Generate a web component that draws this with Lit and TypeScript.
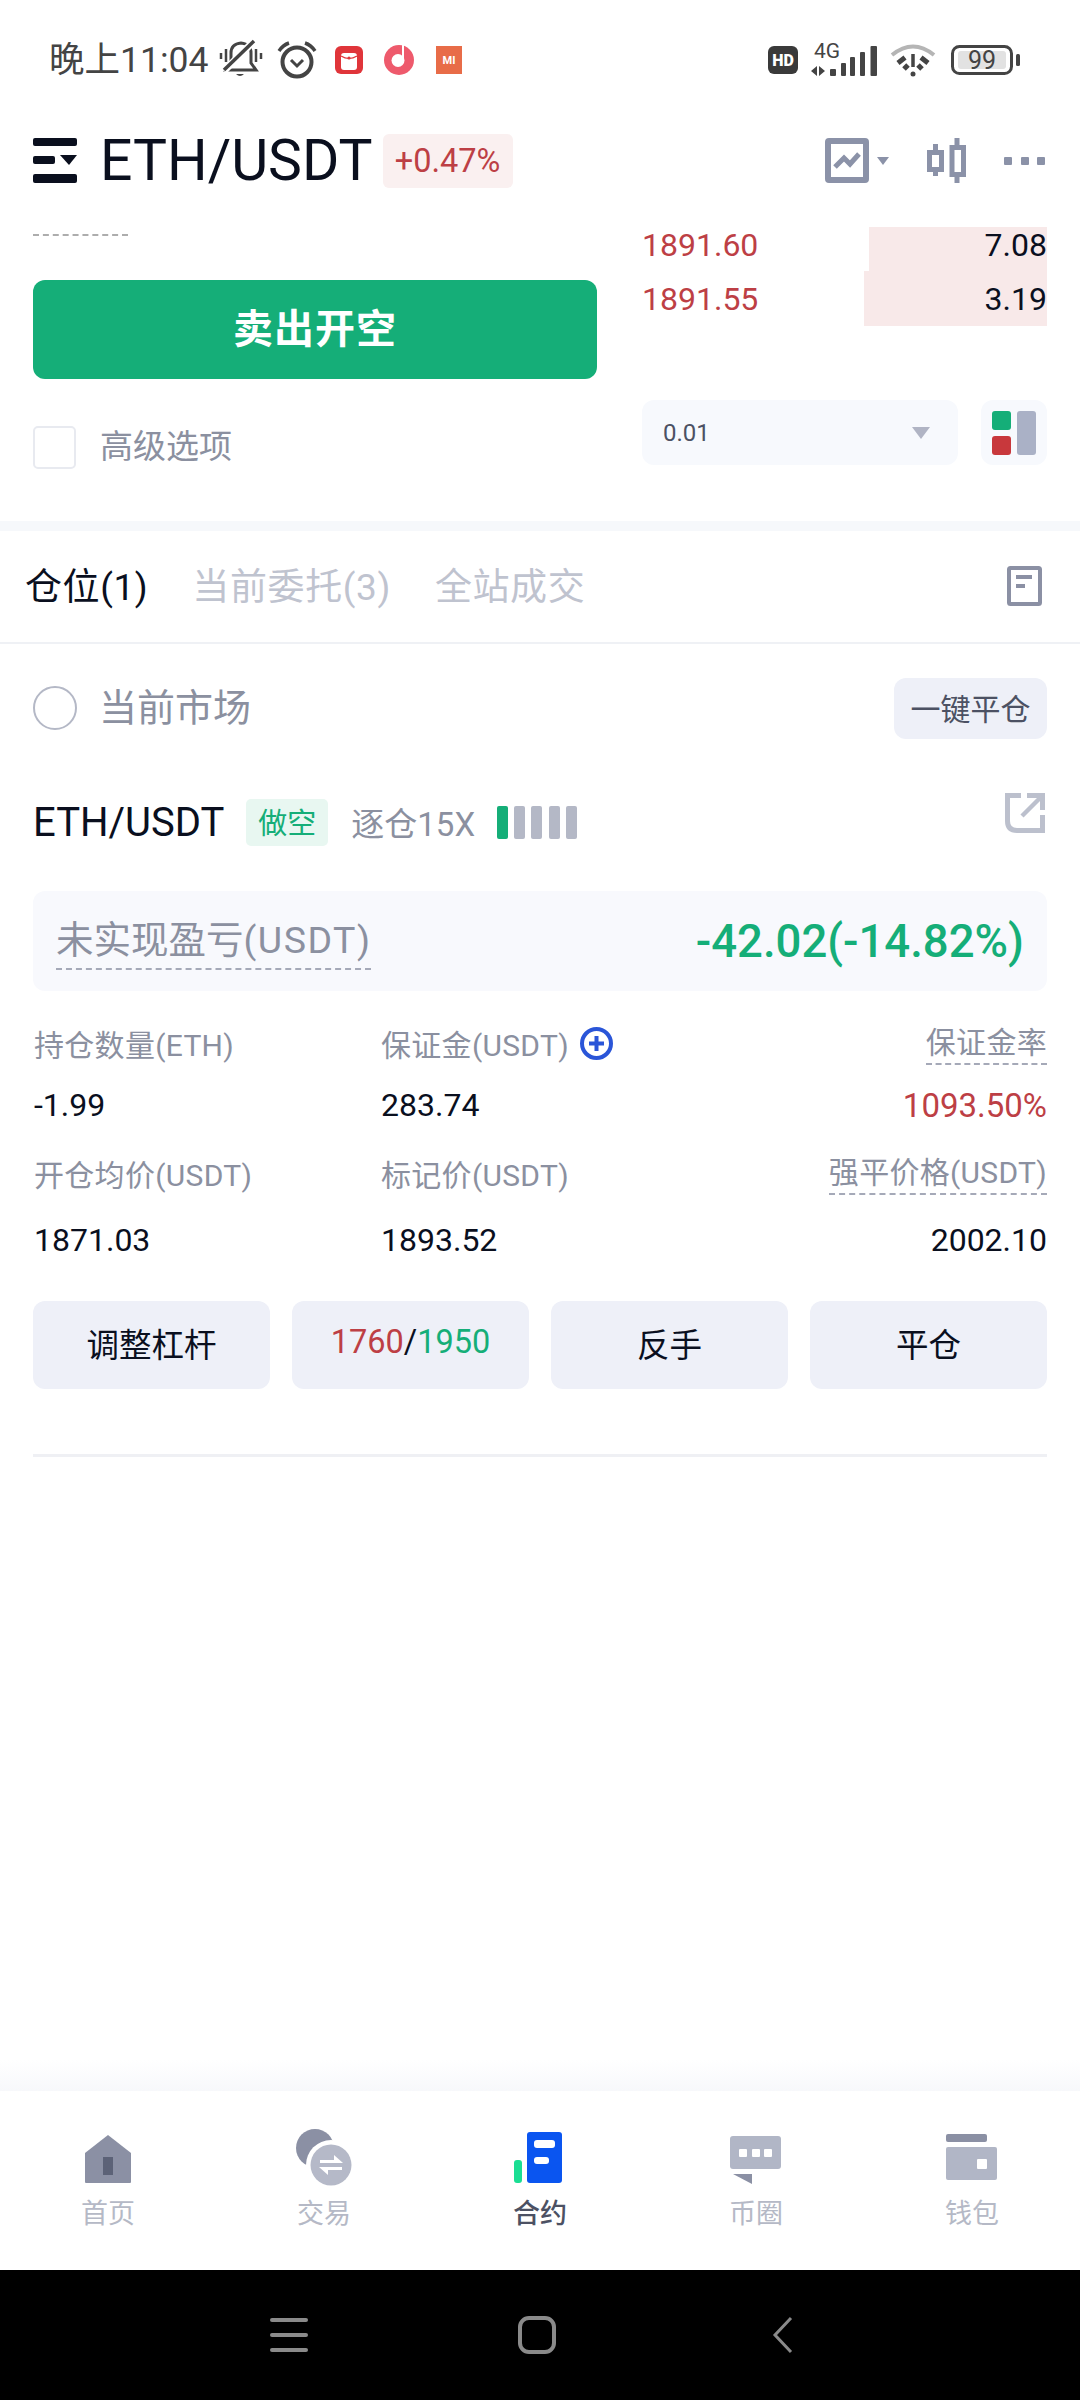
import { LitElement, html, css } from "lit";
import { customElement } from "lit/decorators.js";

const book = [
  { price: "1891.60", qty: "7.08", bar: 178 },
  { price: "1891.55", qty: "3.19", bar: 183 },
];

const stats = [
  [
    { t: "持仓数量(ETH)", c: "" },
    { t: "保证金(USDT)", c: "plus" },
    { t: "保证金率", c: "dash" },
  ],
  [
    { t: "-1.99", c: "" },
    { t: "283.74", c: "" },
    { t: "1093.50%", c: "red" },
  ],
  [
    { t: "开仓均价(USDT)", c: "" },
    { t: "标记价(USDT)", c: "" },
    { t: "强平价格(USDT)", c: "dash" },
  ],
  [
    { t: "1871.03", c: "" },
    { t: "1893.52", c: "" },
    { t: "2002.10", c: "" },
  ],
];

@customElement("app-root")
export class AppRoot extends LitElement {
  static styles = css`
    :host {
      display: flex;
      flex-direction: column;
      width: 1080px;
      height: 2400px;
      background: #fff;
      font-family: Roboto, "Noto Sans CJK SC", sans-serif;
      color: #0a0f1e;
      overflow: hidden;
    }
    svg { display: block; flex: none; overflow: visible; }

    .status { height: 118px; box-sizing: border-box; padding: 2px 0 0 49px; display: flex; align-items: center; color: #444; }
    .time { font-size: 35.5px; width: 170px; white-space: nowrap; line-height: 44px; }
    .s-alarm { margin-left: 14px; }
    .s-red { margin-left: 18px; }
    .s-music { margin-left: 21px; }
    .s-mi { margin-left: 22px; width: 26px; height: 28px; background: #e86c48; color: #fff; font-size: 11px; font-weight: 700; display: flex; align-items: center; justify-content: center; }
    .s-right { margin-left: auto; padding-right: 60px; display: flex; align-items: center; }
    .hd { width: 30px; height: 28px; border-radius: 6px; background: #3a3a3a; color: #fff; font-size: 16px; font-weight: 900; display: flex; align-items: center; justify-content: center; }
    .s-net { margin-left: 12px; }
    .s-wifi { margin-left: 13px; }
    .battery { margin-left: 15px; }

    .header { height: 85px; display: flex; align-items: center; padding: 0 35px 0 33px; }
    .title { font-size: 57px; margin-left: 23px; line-height: 1; white-space: nowrap; }
    .change { margin-left: 10px; height: 54px; width: 130px; border-radius: 6px; background: #faf0f0; color: #bd3f45; font-size: 32.5px; display: flex; align-items: center; justify-content: center; }
    .tools { margin-left: auto; display: flex; align-items: center; }
    .caret { margin-left: 8px; }
    .candle { margin-left: 38px; }
    .dots { margin-left: 38px; display: flex; gap: 8.5px; }
    .dots i { width: 8px; height: 8px; background: #8b92a8; border-radius: 1px; }

    .trade { height: 318px; padding: 0 33px; display: grid; grid-template-columns: 564px 405px; column-gap: 45px; }
    .left { display: flex; flex-direction: column; }
    .dashline { margin-top: 31px; width: 95px; height: 0; border-top: 2px dashed #adadad; }
    .sell { margin-top: 44px; height: 99px; box-sizing: border-box; padding-bottom: 8px; border-radius: 12px; background: #15ae78; color: #fff; font-size: 40px; font-weight: 700; display: flex; align-items: center; justify-content: center; letter-spacing: 1px; }
    .adv { margin-top: 41px; display: flex; align-items: center; gap: 24px; font-size: 33px; color: #8b90a0; }
    .adv span { padding-bottom: 6px; }
    .check { width: 43px; height: 43px; box-sizing: border-box; border: 2.5px solid #e8eaf0; border-radius: 5px; }

    .right { display: flex; flex-direction: column; padding-top: 24px; }
    .rows { overflow: hidden; height: 99px; }
    .row { position: relative; height: 53px; display: flex; align-items: center; justify-content: space-between; font-size: 32px; }
    .row:first-child { margin-top: -9px; }
    .row:last-child { height: 55px; }
    .row .bar { position: absolute; right: 0; top: 0; bottom: 0; background: #f8e9e9; }
    .row .p { color: #bd3f45; position: relative; }
    .row .q { position: relative; }
    .ctrl { margin-top: 74px; display: flex; justify-content: space-between; }
    .select { width: 316px; height: 65px; box-sizing: border-box; padding: 0 28px 0 21px; border-radius: 12px; background: #f7f9fd; display: flex; align-items: center; justify-content: space-between; font-size: 24px; color: #4c5163; }
    .layout { width: 66px; height: 65px; border-radius: 12px; background: #f7f9fd; display: flex; align-items: center; justify-content: center; }

    .band { height: 10px; background: #f6f8fb; }

    .tabs { height: 111px; padding: 0 38px 0 25px; display: flex; align-items: center; gap: 44px; font-size: 37px; letter-spacing: 0.6px; color: #bfc3cf; border-bottom: 2px solid #eff1f5; }
    .tabs span { padding-bottom: 5px; }
    .tabs .on { color: #0a0f1e; }
    .tabs svg { margin-left: auto; margin-bottom: 2px; }

    .market { height: 128px; padding: 0 33px; display: flex; align-items: center; }
    .radio { width: 44px; height: 44px; box-sizing: border-box; border: 2.5px solid #b4b8c6; border-radius: 50%; }
    .market .lbl { margin-left: 22px; font-size: 38px; color: #8b90a0; padding-bottom: 8px; }
    .close-all { margin-left: auto; width: 153px; height: 61px; box-sizing: border-box; padding-bottom: 2px; border-radius: 12px; background: #eef0f8; color: #4c5163; font-size: 30px; display: flex; align-items: center; justify-content: center; }

    .pos-head { height: 100px; padding: 0 35px 0 33px; display: flex; align-items: center; }
    .pair { font-size: 40px; white-space: nowrap; }
    .tag { margin-left: 22px; width: 82px; height: 47px; box-sizing: border-box; padding-bottom: 2px; border-radius: 5px; background: #e8f7f1; color: #15ae78; font-size: 29px; display: flex; align-items: center; justify-content: center; }
    .lev { margin-left: 23px; font-size: 33px; color: #8b90a0; white-space: nowrap; }
    .lev-bars { margin-left: 22px; display: flex; gap: 6.2px; }
    .lev-bars i { width: 11px; height: 33px; border-radius: 2px; background: #b4b8c6; }
    .lev-bars i.g { background: #15ae78; }
    .pos-head svg { margin-left: auto; align-self: flex-start; margin-top: 21px; }

    .pnl { margin: 19px 33px 0; height: 100px; box-sizing: border-box; padding: 0 23px; border-radius: 12px; background: #f8f9fd; display: flex; align-items: center; justify-content: space-between; }
    .pnl .k { font-size: 37.5px; color: #8b90a0; border-bottom: 2px dashed #a5a9b8; line-height: 48px; padding-bottom: 4px; margin-top: 4px; white-space: nowrap; }
    .pnl .k span { letter-spacing: 1.5px; }
    .pnl .v { font-size: 45.5px; font-weight: 500; color: #15ae78; white-space: nowrap; }

    .stats { margin: 20px 33px 0 34px; display: grid; grid-template-columns: 347px 1fr auto; grid-template-rows: 64px 60px 76px 58px; align-items: center; font-size: 32px; }
    .stats .lab { font-size: 30px; letter-spacing: 0.3px; color: #8b90a0; display: flex; align-items: center; gap: 11px; }
    .stats .end { justify-self: end; }
    .stats .dash > span { border-bottom: 2px dashed #a5a9b8; line-height: 36px; padding: 4px 0 2px; }
    .stats .red { color: #bd3f45; font-size: 33px; }

    .actions { margin: 32px 33px 0; display: flex; gap: 22px; }
    .actions div { flex: 1; height: 88px; box-sizing: border-box; padding-bottom: 6px; border-radius: 12px; background: #eef0f8; font-size: 32.5px; display: flex; align-items: center; justify-content: center; }
    .actions .r { color: #bd3f45; }
    .actions .g { color: #15ae78; }

    .rule { margin: 65px 33px 0; height: 3px; background: #eff0f4; }
    .spacer { flex: 1; }
    .fade { height: 31px; background: linear-gradient(#ffffff, #f7f8fb); }

    .nav { height: 179px; box-sizing: border-box; padding-top: 37px; display: grid; grid-template-columns: repeat(5, 216px); }
    .item { display: flex; flex-direction: column; align-items: center; font-size: 27px; color: #b5b9c6; }
    .item span { margin-top: 7px; line-height: 38px; }
    .item.on { color: #4c5163; font-weight: 500; }

    .sys { height: 130px; background: #000; padding: 0 0 0 270px; display: flex; align-items: center; }
    .sys .h { margin-left: 210px; }
    .sys .b { margin-left: 217px; }
  `;

  render() {
    return html`
      <div class="status">
        <div class="time">晚上11:04</div>
        <svg class="s-bell" width="44" height="40" viewBox="0 0 44 40" fill="none" stroke="#444" stroke-width="3">
          <path d="M7 30L12 23V13Q12 4 22 3Q32 4 32 13V23L37 30Z"/>
          <path d="M5 31L35 1" stroke="#fff" stroke-width="7"/>
          <path d="M5 30L35 1" stroke-width="3.5"/>
          <path d="M17 34Q21 38 25 34Z" fill="#444" stroke="none"/>
          <path d="M2 13V19M7 9V22M37 9V22M42 13V19" stroke-width="2.5"/>
        </svg>
        <svg class="s-alarm" width="40" height="38" viewBox="0 0 40 38" fill="none" stroke="#444" stroke-width="4">
          <circle cx="20" cy="21" r="14.5"/>
          <path d="M2 10Q6 4 12 2M28 2Q34 4 38 10" stroke-width="3.5"/>
          <path d="M14 19L20 25L26 19" stroke-width="3"/>
        </svg>
        <svg class="s-red" width="28" height="28" viewBox="0 0 28 28">
          <rect width="28" height="28" rx="6" fill="#e0353a"/>
          <rect x="6" y="7" width="16" height="17" rx="3" fill="#fff"/>
          <path d="M6 10Q14 15 22 10" fill="none" stroke="#e0353a" stroke-width="1.2"/>
          <circle cx="14" cy="12" r="1.6" fill="#e0353a"/>
        </svg>
        <svg class="s-music" width="30" height="30" viewBox="0 0 30 30">
          <circle cx="15" cy="15" r="15" fill="#ee5a6c"/>
          <circle cx="14" cy="15.5" r="6.5" fill="#fff"/>
          <rect x="18" y="0" width="2" height="15" fill="#fff"/>
        </svg>
        <div class="s-mi">MI</div>
        <div class="s-right">
          <div class="hd">HD</div>
          <svg class="s-net" width="67" height="36" viewBox="0 0 67 36">
            <text x="4" y="16" font-family="Roboto, sans-serif" font-size="21" fill="#444">4G</text>
            <path d="M1 29L7 24V34ZM15 29L9 24V34Z" fill="#444"/>
            <rect x="20" y="27" width="6" height="7" rx="1" fill="#444"/>
            <rect x="31" y="21" width="5" height="13" rx="1" fill="#444"/>
            <rect x="40" y="15" width="5" height="19" rx="1" fill="#444"/>
            <rect x="50" y="10" width="5" height="24" rx="1" fill="#444"/>
            <rect x="60.5" y="4" width="6.5" height="30" rx="1" fill="#444"/>
          </svg>
          <svg class="s-wifi" width="46" height="34" viewBox="0 0 46 34" fill="none" stroke="#444" stroke-width="5">
            <path d="M2 12Q23 -5 44 12" stroke="#b5b5b5" stroke-width="4"/>
            <path d="M8 20L15 14.5M38 20L31 14.5M14 26L18 22M32 26L28 22"/>
            <path d="M23 11V24" stroke-width="3.5"/>
            <circle cx="23" cy="31" r="2.5" fill="#444" stroke="none"/>
          </svg>
          <svg class="battery" width="69" height="30" viewBox="0 0 69 30">
            <rect x="1.5" y="1.5" width="59" height="27" rx="7" fill="#fff" stroke="#444" stroke-width="3"/>
            <rect x="7" y="6" width="48" height="18" rx="3" fill="#e2e2e2"/>
            <text x="31" y="24" text-anchor="middle" font-family="Roboto, sans-serif" font-size="25" fill="#444">99</text>
            <rect x="65" y="9" width="4" height="12" rx="1.5" fill="#444"/>
          </svg>
        </div>
      </div>

      <div class="header">
        <svg width="44" height="45" viewBox="0 0 44 45" fill="#0a0f1e">
          <rect width="44" height="8" rx="2"/>
          <rect y="18" width="22" height="8" rx="2"/>
          <rect y="36" width="44" height="9" rx="2"/>
          <path d="M27 17H44L36 27Z"/>
        </svg>
        <div class="title">ETH/USDT</div>
        <div class="change">+0.47%</div>
        <div class="tools">
          <svg width="44" height="45" viewBox="0 0 44 45" fill="none" stroke="#8b92a8">
            <rect x="3" y="3" width="38" height="39" rx="1" stroke-width="6"/>
            <path d="M10 29L19 20L25 26L34 16" stroke-width="5"/>
          </svg>
          <svg class="caret" width="12" height="8" viewBox="0 0 12 8"><path d="M0 0H12L6 8Z" fill="#8b92a8"/></svg>
          <svg class="candle" width="39" height="45" viewBox="0 0 39 45" fill="none" stroke="#8b92a8">
            <path d="M8.5 6V38M30 0V45" stroke-width="5"/>
            <rect x="2.5" y="14.5" width="12" height="17" fill="#fff" stroke-width="5"/>
            <rect x="25" y="9.5" width="11.5" height="27" fill="#fff" stroke-width="5"/>
          </svg>
          <div class="dots"><i></i><i></i><i></i></div>
        </div>
      </div>

      <div class="trade">
        <div class="left">
          <div class="dashline"></div>
          <div class="sell">卖出开空</div>
          <div class="adv"><div class="check"></div><span>高级选项</span></div>
        </div>
        <div class="right">
          <div class="rows">
            ${book.map(
              (r) => html`<div class="row">
                <div class="bar" style="width:${r.bar}px"></div>
                <span class="p">${r.price}</span><span class="q">${r.qty}</span>
              </div>`
            )}
          </div>
          <div class="ctrl">
            <div class="select">
              <span>0.01</span>
              <svg width="18" height="12" viewBox="0 0 18 12"><path d="M0 0H18L9 12Z" fill="#b0b4c4"/></svg>
            </div>
            <div class="layout">
              <svg width="44" height="44" viewBox="0 0 44 44">
                <rect width="19" height="19" rx="3" fill="#15ae78"/>
                <rect y="25" width="19" height="19" rx="3" fill="#c8383c"/>
                <rect x="25" width="19" height="44" rx="3" fill="#aab1c6"/>
              </svg>
            </div>
          </div>
        </div>
      </div>

      <div class="band"></div>

      <div class="tabs">
        <span class="on">仓位(1)</span>
        <span>当前委托(3)</span>
        <span>全站成交</span>
        <svg width="35" height="40" viewBox="0 0 35 40" fill="none" stroke="#8b90a4">
          <rect x="2" y="2" width="31" height="36" rx="1.5" stroke-width="4"/>
          <path d="M9 11H25M9 20H18" stroke-width="4"/>
        </svg>
      </div>

      <div class="market">
        <div class="radio"></div>
        <div class="lbl">当前市场</div>
        <div class="close-all">一键平仓</div>
      </div>

      <div class="pos-head">
        <div class="pair">ETH/USDT</div>
        <div class="tag">做空</div>
        <div class="lev">逐仓15X</div>
        <div class="lev-bars"><i class="g"></i><i></i><i></i><i></i><i></i></div>
        <svg width="40" height="40" viewBox="0 0 40 40" fill="none" stroke="#bcc0cd" stroke-width="5">
          <path d="M16 2.5H2.5V28Q2.5 37.5 12 37.5H37.5V22"/>
          <path d="M22 2.5H37.5V17"/>
          <path d="M37 3L17 23" stroke-width="4.5"/>
        </svg>
      </div>

      <div class="pnl">
        <div class="k">未实现盈亏<span>(USDT)</span></div>
        <div class="v">-42.02(-14.82%)</div>
      </div>

      <div class="stats">
        ${stats.map((row, ri) =>
          row.map((cell, ci) => {
            const isLab = ri % 2 === 0;
            const cls = [isLab ? "lab" : "", ci === 2 ? "end" : "", cell.c].join(" ");
            return html`<div class=${cls}>
              <span>${cell.t}</span>
              ${cell.c === "plus"
                ? html`<svg width="33" height="33" viewBox="0 0 33 33" fill="none" stroke="#2a55d8" stroke-width="4">
                    <circle cx="16.5" cy="16.5" r="14.5"/>
                    <path d="M16.5 9V24M9 16.5H24"/>
                  </svg>`
                : ""}
            </div>`;
          })
        )}
      </div>

      <div class="actions">
        <div>调整杠杆</div>
        <div><span class="r">1760</span>/<span class="g">1950</span></div>
        <div>反手</div>
        <div>平仓</div>
      </div>

      <div class="rule"></div>
      <div class="spacer"></div>
      <div class="fade"></div>

      <div class="nav">
        <div class="item">
          <svg width="80" height="60" viewBox="0 0 80 60">
            <path d="M40 7L63 25V54Q63 55 62 55H18Q17 55 17 54V25Z" fill="#8b90a4"/>
            <rect x="35" y="29" width="10" height="18" fill="#5c6277"/>
          </svg>
          <span>首页</span>
        </div>
        <div class="item">
          <svg width="80" height="60" viewBox="0 0 80 60">
            <circle cx="31" cy="20" r="19" fill="#8b90a4"/>
            <circle cx="47" cy="37" r="25" fill="#fff"/>
            <circle cx="47" cy="37" r="20.5" fill="#b5b9c8"/>
            <path d="M36 35H59L50 27V32H36ZM58 39H35L44 47V42H58Z" fill="#fff"/>
          </svg>
          <span>交易</span>
        </div>
        <div class="item on">
          <svg width="80" height="60" viewBox="0 0 80 60">
            <rect x="27" y="4" width="35" height="51" rx="3" fill="#0a55f0"/>
            <rect x="34" y="12" width="21" height="8" rx="3" fill="#fff"/>
            <rect x="34" y="29" width="15" height="7" rx="3" fill="#fff"/>
            <rect x="14" y="32" width="8" height="23" rx="3" fill="#1ade93"/>
          </svg>
          <span>合约</span>
        </div>
        <div class="item">
          <svg width="80" height="60" viewBox="0 0 80 60">
            <rect x="14" y="8" width="51" height="33" rx="3" fill="#b1b6c6"/>
            <rect x="23" y="21" width="8" height="8" rx="1" fill="#fff"/>
            <rect x="36" y="21" width="8" height="8" rx="1" fill="#fff"/>
            <rect x="48" y="21" width="8" height="8" rx="1" fill="#fff"/>
            <path d="M17 46H36V56Z" fill="#8b90a4"/>
          </svg>
          <span>币圈</span>
        </div>
        <div class="item">
          <svg width="80" height="60" viewBox="0 0 80 60">
            <rect x="14" y="6" width="41" height="8" rx="2" fill="#8b90a4"/>
            <rect x="14" y="19" width="51" height="33" rx="2" fill="#b1b6c6"/>
            <rect x="45" y="31" width="10" height="10" rx="1" fill="#fff"/>
          </svg>
          <span>钱包</span>
        </div>
      </div>

      <div class="sys">
        <svg width="38" height="34" viewBox="0 0 38 34" fill="#8a8a8a">
          <rect width="38" height="4" rx="2"/>
          <rect y="15" width="38" height="4" rx="2"/>
          <rect y="30" width="38" height="4" rx="2"/>
        </svg>
        <svg class="h" width="38" height="38" viewBox="0 0 38 38">
          <rect x="2" y="2" width="34" height="34" rx="9" fill="none" stroke="#8a8a8a" stroke-width="4"/>
        </svg>
        <svg class="b" width="20" height="36" viewBox="0 0 20 36">
          <path d="M18 1L2 18L18 35" fill="none" stroke="#8a8a8a" stroke-width="3"/>
        </svg>
      </div>
    `;
  }
}
